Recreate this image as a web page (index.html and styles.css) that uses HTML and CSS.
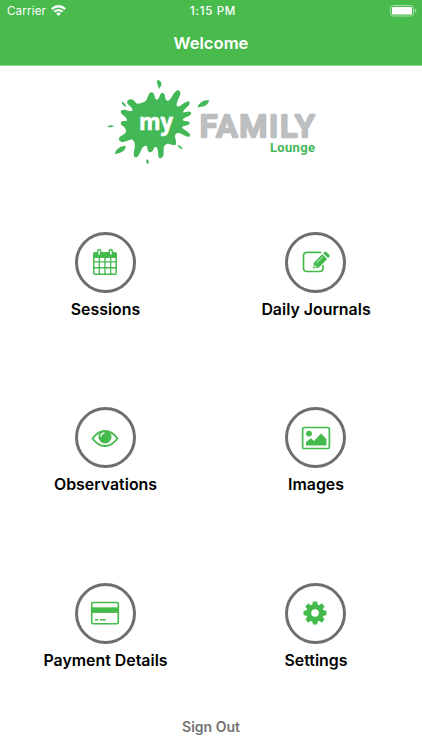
FILE: index.html
```html
<!DOCTYPE html>
<html lang="en">
<head>
<meta charset="utf-8">
<title>Welcome</title>
<link rel="stylesheet" href="styles.css">
</head>
<body>
<header class="header">
  <div class="status">
    <div class="carrier"><span>Carrier</span>
      <svg class="wifi" viewBox="0 0 15 11" fill="#fff"><path d="M0 3.2Q7.5-3 15 3.2L13.4 4.9Q7.5 0 1.6 4.9Z"/><path d="M2.6 5.9Q7.5 2 12.4 5.9L10.8 7.5Q7.5 5 4.2 7.5Z"/><path d="M5.1 8.4Q7.5 6.7 9.9 8.4L7.5 10.9Z"/></svg>
    </div>
    <div class="time">1:15 PM</div>
    <svg class="battery" viewBox="0 0 27 12"><rect x=".5" y=".5" width="23" height="10.5" rx="2.8" fill="none" stroke="#a9dfad"/><rect x="2" y="2" width="20" height="7.5" rx="1.2" fill="#fff"/><path d="M25 4Q26.5 4.3 26.5 5.8T25 7.6Z" fill="#a9dfad"/></svg>
  </div>
  <h1 class="title">Welcome</h1>
</header>
<main class="main">
  <svg class="logo" viewBox="0 0 690 285">
    <g fill="#43b857">
      <path class="splat" d="M84 79C90 72 98 75 105 84C113 95 122 86 134 83C147 80 143 57 154 54C165 53 158 75 170 77C182 79 178 58 187 56C197 56 188 77 201 80C218 84 219 48 235 48C248 55 223 78 228 93C237 108 251 82 265 81C275 90 240 102 248 114C254 118 262 109 270 113C277 121 247 122 246 134C246 145 262 137 267 144C266 152 246 147 244 155C241 164 270 174 268 181C262 190 246 168 231 172C213 178 229 197 226 206C221 212 211 202 202 204C184 208 190 224 188 240C186 249 178 250 177 241C177 226 177 214 167 213C156 213 161 229 151 230C141 229 149 212 139 210C118 207 121 244 107 245C96 240 113 218 105 200C98 180 83 199 66 199C52 193 60 186 74 179C86 172 79 160 75 155C71 150 63 150 65 143C68 137 81 145 83 136C85 122 63 119 65 109C73 101 91 117 99 108C107 98 79 88 84 79Z"/>
      <path d="M170 17C181 11 186 25 184 32Q179 35 178 43Q172 32 170 17ZM292 97C298 81 313 73 327 76C326 91 311 96 292 97ZM44 237C49 220 62 212 77 213C78 227 61 236 44 237ZM65 80Q73 79 79 95Q68 94 65 80ZM22 155Q31 148 42 153Q34 159 22 155ZM232 210Q246 212 248 223Q237 221 232 210ZM140 253Q149 255 145 268Q136 264 140 253Z"/>
    </g>
    <text class="my" x="117" y="166" textLength="102" lengthAdjust="spacingAndGlyphs">my</text>
    <text class="family" x="299" y="186" textLength="350" lengthAdjust="spacingAndGlyphs">FAMILY</text>
    <text class="lounge" x="510" y="231" textLength="136" lengthAdjust="spacingAndGlyphs">Lounge</text>
  </svg>
  <nav class="grid">
    <a class="tile"><span class="ring"><svg viewBox="0 0 30 30"><path fill="#44b94c" fill-rule="evenodd" d="M5 5H25Q27 5 27 7V26Q27 28 25 28H5Q3 28 3 26V7Q3 5 5 5ZM4.5 11V14.2H8.7V11ZM10 11V14.2H14.3V11ZM15.6 11V14.2H20V11ZM21.3 11V14.2H25.5V11ZM4.5 15.6V20H8.7V15.6ZM10 15.6V20H14.3V15.6ZM15.6 15.6V20H20V15.6ZM21.3 15.6V20H25.5V15.6ZM4.5 21.4V26.5H8.7V21.4ZM10 21.4V26.5H14.3V21.4ZM15.6 21.4V26.5H20V21.4ZM21.3 21.4V26.5H25.5V21.4Z"/><g fill="#fff" stroke="#44b94c" stroke-width="1.4"><rect x="7.7" y="2.5" width="3" height="6" rx="1.5"/><rect x="19.3" y="2.5" width="3" height="6" rx="1.5"/></g></svg></span><span class="label sessions">Sessions</span></a>
    <a class="tile"><span class="ring"><svg viewBox="0 0 30 30"><path fill="none" stroke="#44b94c" stroke-width="1.7" stroke-linecap="round" d="M19.5 5.3H6Q2.5 5.3 2.5 8.8V21Q2.5 24.5 6 24.5H18.5Q22 24.5 22 21V18.7"/><path fill="#44b94c" d="M12 21.5L13 15.5L21.3 7.2L26.2 12.1L17.9 20.4ZM22.2 6.3L23.6 4.9Q24.5 4.1 25.4 4.9L28.4 7.9Q29.2 8.8 28.4 9.7L27.1 11.1Z"/><path fill="none" stroke="#fff" stroke-width=".8" d="M15.7 15.7L21.8 9.6"/><path fill="#fff" d="M13.6 18L15.6 19.9L13.1 20.5Z"/></svg></span><span class="label journals">Daily Journals</span></a>
    <a class="tile"><span class="ring"><svg viewBox="0 0 30 30"><path d="M2.5 15.5Q8 8 15 8T27.5 15.5Q22 23 15 23T2.5 15.5Z" fill="none" stroke="#44b94c" stroke-width="1.8"/><circle cx="15" cy="14" r="6.5" fill="#44b94c"/><path d="M11 13.3Q11.2 10.3 14 9.8" fill="none" stroke="#fff" stroke-width="1.3" stroke-linecap="round"/></svg></span><span class="label observations">Observations</span></a>
    <a class="tile"><span class="ring"><svg viewBox="0 0 30 30"><rect x="1.6" y="4.5" width="26.8" height="21" rx="1.5" fill="none" stroke="#44b94c" stroke-width="1.7"/><circle cx="8" cy="10.6" r="2.9" fill="#44b94c"/><path fill="#44b94c" d="M5 22.5V19L10 15.2L13 18L20 10.5L25.4 16V22.5Z"/></svg></span><span class="label images">Images</span></a>
    <a class="tile"><span class="ring"><svg viewBox="0 0 30 30"><rect x="1.7" y="4.5" width="26.6" height="21.2" rx="1.5" fill="none" stroke="#44b94c" stroke-width="1.6"/><path fill="#44b94c" d="M1.5 9.3H28.5V14.9H1.5Z"/><path stroke="#44b94c" stroke-width="1.5" d="M4.8 21.8H8.2M10.2 21.8H15.7"/></svg></span><span class="label payment">Payment Details</span></a>
    <a class="tile"><span class="ring settings-ring"><svg viewBox="0 0 30 30"><g fill="#44b94c"><circle cx="15" cy="15" r="8.7"/><g id="teeth"><path id="tooth" d="M12 8L12.8 4Q12.9 3.5 13.5 3.5H16.5Q17.1 3.5 17.2 4L18 8Z"/><use href="#tooth" transform="rotate(90 15 15)"/><use href="#tooth" transform="rotate(180 15 15)"/><use href="#tooth" transform="rotate(270 15 15)"/></g><use href="#teeth" transform="rotate(45 15 15)"/></g><circle cx="15" cy="15" r="3.8" fill="#fff"/></svg></span><span class="label settings">Settings</span></a>
  </nav>
</main>
<footer class="footer"><a class="signout">Sign Out</a></footer>
</body>
</html>
```
FILE: styles.css
```css
* { box-sizing: border-box; }
body {
  margin: 0;
  height: 750px;
  display: flex;
  flex-direction: column;
  overflow: hidden;
  background: #fff;
  font-family: Inter, "Liberation Sans", sans-serif;
}
.header { height: 66px; background: #49bb4d; color: #fff; border-bottom: 1px solid #8fd592; }
.status { height: 22px; padding: 0 5px 0 7px; display: grid; grid-template-columns: 1fr auto 1fr; align-items: center; font-size: 11.5px; }
.carrier { display: flex; align-items: center; gap: 5px; letter-spacing: .2px; }
.wifi { width: 15px; height: 11px; margin-top: -2px; }
.time { font-weight: 500; letter-spacing: .7px; padding-left: 2px; }
.battery { width: 27px; height: 12px; justify-self: end; margin-top: -1px; }
.title { margin: 0; height: 43px; line-height: 43px; text-align: center; font-size: 16.6px; font-weight: 600; }
.logo { display: block; width: 230px; height: 95px; margin: 9px 0 0 100px; }
.splat { stroke: #43b857; stroke-width: 5px; stroke-linejoin: round; }
.my { font: bold 72px "Open Sans", sans-serif; fill: #fff; stroke: #fff; stroke-width: 2px; }
.family { font: 500 95px Roboto, sans-serif; letter-spacing: 5px; fill: #bcbec0; stroke: #bcbec0; stroke-width: 7px; stroke-linejoin: round; }
.lounge { font: bold 39px Roboto, sans-serif; letter-spacing: 1px; fill: #43b857; }
.grid { display: grid; grid-template-columns: 210px 211px; grid-template-rows: 175.7px 175.7px auto; margin-top: 61.5px; }
.tile { display: flex; flex-direction: column; align-items: center; color: #000; }
.ring { width: 61px; height: 61px; border: 3px solid #6e6e6e; border-radius: 50%; display: flex; align-items: center; justify-content: center; }
.ring svg { width: 30px; height: 30px; flex: none; }
.settings-ring { margin-right: 1px; }
.label { margin-top: 7px; padding-left: 1px; line-height: 20px; font-size: 15.9px; font-weight: 600; white-space: nowrap; }
.footer { margin-top: auto; height: 34px; text-align: center; }
.signout { font-size: 14px; line-height: 22px; font-weight: 600; color: #737373; }
```
